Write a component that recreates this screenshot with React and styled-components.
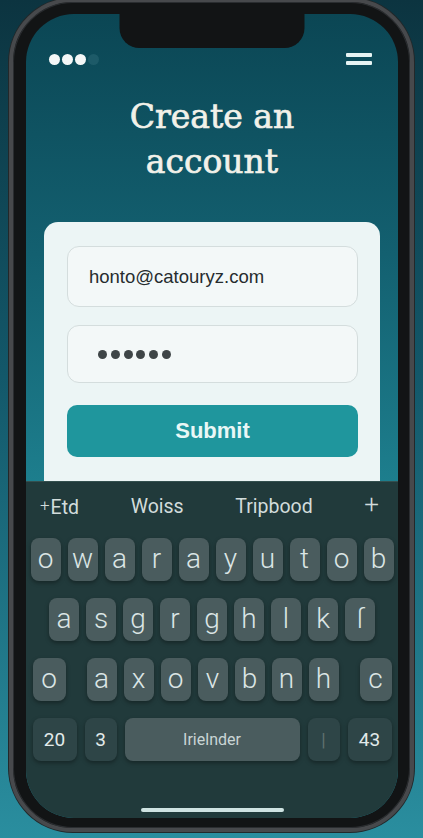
import React from "react";
import styled, { createGlobalStyle } from "styled-components";

const GlobalStyle = createGlobalStyle`
  html, body {
    margin: 0;
    padding: 0;
    height: 100%;
  }
  body {
    background: linear-gradient(180deg, #0c3440 0%, #13586a 45%, #2a8e9f 100%);
    overflow: hidden;
    font-family: "Liberation Sans", Arial, sans-serif;
  }
  * { box-sizing: border-box; }
`;

const Page = styled.div`
  width: 423px;
  height: 838px;
  padding-left: 9px;
`;

const Phone = styled.div`
  width: 405px;
  height: 834px;
  margin-top: -2px;
  border: 4px solid #47494c;
  border-radius: 64px;
  background: #121415;
  padding: 12px 12px 10px 13px;
  box-shadow: 0 0 0 1px #23282a, inset 0 0 0 1px #2a2d30;
`;

const Screen = styled.div`
  position: relative;
  height: 100%;
  border-radius: 48px;
  overflow: hidden;
  display: flex;
  flex-direction: column;
  background: linear-gradient(180deg, #0b4654 0px, #136070 240px, #1d7e8d 467px, #1d7e8d 100%);
`;

const Notch = styled.div`
  position: absolute;
  top: 0;
  left: 50%;
  transform: translateX(-50%);
  width: 185px;
  height: 34px;
  background: #121415;
  border-radius: 0 0 20px 20px;
`;

const Header = styled.div`
  display: flex;
  justify-content: space-between;
  align-items: center;
  padding: 39px 26px 0 23px;
  height: 51px;
`;

const Dots = styled.div`
  display: flex;
  gap: 2px;
`;

const Dot = styled.span`
  width: 11px;
  height: 11px;
  border-radius: 50%;
  background: ${(p) => (p.$dim ? "#1d5a68" : "#f4f7f7")};
`;

const Burger = styled.div`
  display: flex;
  flex-direction: column;
  gap: 4px;
`;

const Bar = styled.span`
  width: 26px;
  height: 4px;
  border-radius: 1px;
  background: #e6f3f3;
`;

const Title = styled.h1`
  margin: 29px 0 0;
  text-align: center;
  font-family: "DejaVu Serif", "Liberation Serif", serif;
  font-weight: normal;
  font-size: 33px;
  line-height: 45px;
  color: #f2f1e9;
  -webkit-text-stroke: 0.7px #f2f1e9;
`;

const Card = styled.div`
  flex: 1;
  margin: 38px 18px 0;
  background: #ecf5f5;
  border-radius: 14px 14px 0 0;
  padding: 24px 22px 0 23px;
  display: flex;
  flex-direction: column;
`;

const Field = styled.div`
  height: ${(p) => p.$h}px;
  margin-top: ${(p) => p.$mt || 0}px;
  border: 1.5px solid #d4dddd;
  border-radius: 12px;
  background: #f3f8f8;
  display: flex;
  align-items: center;
  padding-left: ${(p) => p.$pl}px;
  font-size: 18.5px;
  color: #262c2e;
`;

const PassDots = styled.div`
  display: flex;
  gap: 3.8px;
`;

const PassDot = styled.span`
  width: 9px;
  height: 9px;
  border-radius: 50%;
  background: #3e4547;
`;

const SubmitButton = styled.button`
  margin-top: 22px;
  height: 52px;
  border: none;
  border-radius: 10px;
  background: #1f969d;
  color: #e9f7f6;
  font-family: "Liberation Sans", Arial, sans-serif;
  font-weight: bold;
  font-size: 22px;
`;

const Keyboard = styled.div`
  height: 337px;
  flex-shrink: 0;
  background: #213a3b;
  border-top: 1px solid #34504f;
  display: flex;
  flex-direction: column;
`;

const Suggestions = styled.div`
  height: 49px;
  display: flex;
  align-items: center;
  justify-content: space-between;
  padding: 0 19px 0 14px;
  font-family: Roboto, "Liberation Sans", sans-serif;
  font-size: 19.5px;
  color: #d2dcdb;
`;

const SmallPlus = styled.span`
  font-weight: 300;
  font-size: 17px;
  vertical-align: 3px;
  margin-right: 1px;
`;

const PlusLight = styled.span`
  font-weight: 300;
  font-size: 26px;
  margin-top: -6px;
`;

const Rows = styled.div`
  display: flex;
  flex-direction: column;
  gap: 17px;
  padding-top: 7px;
`;

const Row = styled.div`
  display: flex;
  justify-content: center;
  gap: ${(p) => p.$gap || 7}px;
`;

const Key = styled.div`
  width: ${(p) => p.$w || 30}px;
  height: 43px;
  margin-left: ${(p) => p.$ml || 0}px;
  border-radius: 8px;
  background: ${(p) => (p.$dark ? "#2e4547" : "#4a5c5e")};
  box-shadow: 0 2px 4px rgba(0, 0, 0, 0.35);
  display: flex;
  align-items: center;
  justify-content: center;
  font-family: Roboto, "Liberation Sans", sans-serif;
  font-weight: ${(p) => (p.$label ? 400 : 300)};
  font-size: ${(p) => p.$fs || 28}px;
  color: ${(p) => p.$color || "#dbe5e5"};
  line-height: 1;
  padding-bottom: ${(p) => (p.$label ? 0 : 2)}px;
`;

const HomeBar = styled.div`
  margin-top: auto;
  margin-bottom: 6px;
  align-self: center;
  width: 143px;
  height: 4px;
  border-radius: 2px;
  background: #cfe3e2;
`;

const row1 = ["o", "w", "a", "r", "a", "y", "u", "t", "o", "b"];
const row2 = ["a", "s", "g", "r", "g", "h", "l", "k", "ſ"];
const row3mid = ["a", "x", "o", "v", "b", "n", "h"];

export default function App() {
  return (
    <Page>
      <GlobalStyle />
      <Phone>
        <Screen>
          <Notch />
          <Header>
            <Dots>
              <Dot />
              <Dot />
              <Dot />
              <Dot $dim />
            </Dots>
            <Burger>
              <Bar />
              <Bar />
            </Burger>
          </Header>
          <Title>
            Create an
            <br />
            account
          </Title>
          <Card>
            <Field $h={61} $pl={21}>honto@catouryz.com</Field>
            <Field $h={58} $mt={18} $pl={30}>
              <PassDots>
                {[0, 1, 2, 3, 4, 5].map((i) => (
                  <PassDot key={i} />
                ))}
              </PassDots>
            </Field>
            <SubmitButton>Submit</SubmitButton>
          </Card>
          <Keyboard>
            <Suggestions>
              <span>
                <SmallPlus>+</SmallPlus>Etd
              </span>
              <span>Woiss</span>
              <span>Tripbood</span>
              <PlusLight>+</PlusLight>
            </Suggestions>
            <Rows>
              <Row>
                {row1.map((k, i) => (
                  <Key key={i}>{k}</Key>
                ))}
              </Row>
              <Row>
                {row2.map((k, i) => (
                  <Key key={i}>{k}</Key>
                ))}
              </Row>
              <Row>
                <Key $w={33}>o</Key>
                {row3mid.map((k, i) => (
                  <Key key={i} $ml={i === 0 ? 14 : 0}>
                    {k}
                  </Key>
                ))}
                <Key $w={32} $ml={14}>c</Key>
              </Row>
              <Row $gap={8}>
                <Key $w={44} $dark $label $fs={19} $color="#e2eaea">20</Key>
                <Key $w={32} $dark $label $fs={19} $color="#e2eaea">3</Key>
                <Key $w={175} $label $fs={16} $color="#c9d5d5">Irielnder</Key>
                <Key $w={32} $dark $label $fs={18} $color="#60716f">|</Key>
                <Key $w={44} $dark $label $fs={19} $color="#e2eaea">43</Key>
              </Row>
            </Rows>
            <HomeBar />
          </Keyboard>
        </Screen>
      </Phone>
    </Page>
  );
}
